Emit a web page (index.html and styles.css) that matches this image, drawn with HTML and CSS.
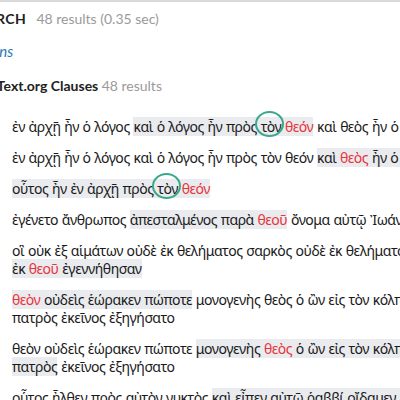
FILE: index.html
```html
<!DOCTYPE html>
<html>
<head>
<meta charset="utf-8">
<link rel="stylesheet" href="styles.css">
</head>
<body>
<div class="page">
  <header class="search-head">
    <span class="search-title">SEARCH</span>
    <span class="muted">48 results (0.35 sec)</span>
  </header>
  <div class="options"><a class="opt-link">Options</a></div>
  <section class="group">
    <h2 class="group-title"><span class="src">OpenText.org Clauses</span> <span class="muted">48 results</span></h2>
    <div class="results">
      <p class="row">ἐν ἀρχῇ ἦν ὁ λόγος <span class="hl">καὶ ὁ λόγος ἦν πρὸς <span class="ring">τὸν</span> <span class="red">θεόν</span></span> καὶ θεὸς ἦν ὁ λόγος</p>
      <p class="row">ἐν ἀρχῇ ἦν ὁ λόγος καὶ ὁ λόγος ἦν πρὸς τὸν θεόν <span class="hl">καὶ <span class="red">θεὸς</span> ἦν ὁ λόγος</span></p>
      <p class="row"><span class="hl">οὗτος ἦν ἐν ἀρχῇ πρὸς <span class="ring">τὸν</span> <span class="red">θεόν</span></span></p>
      <p class="row">ἐγένετο ἄνθρωπος <span class="hl">ἀπεσταλμένος παρὰ <span class="red">θεοῦ</span></span> ὄνομα αὐτῷ Ἰωάννης</p>
      <p class="row">οἳ οὐκ ἐξ αἱμάτων οὐδὲ ἐκ θελήματος σαρκὸς οὐδὲ ἐκ θελήματος ἀνδρὸς <span class="hl">ἀλλ᾽<br>ἐκ <span class="red">θεοῦ</span> ἐγεννήθησαν</span></p>
      <p class="row"><span class="hl"><span class="red">θεὸν</span> οὐδεὶς ἑώρακεν πώποτε</span> μονογενὴς θεὸς ὁ ὢν εἰς τὸν κόλπον τοῦ<br>πατρὸς ἐκεῖνος ἐξηγήσατο</p>
      <p class="row">θεὸν οὐδεὶς ἑώρακεν πώποτε <span class="hl">μονογενὴς <span class="red">θεὸς</span> ὁ ὢν εἰς τὸν κόλπον τοῦ<br>πατρὸς</span> ἐκεῖνος ἐξηγήσατο</p>
      <p class="row">οὗτος ἦλθεν πρὸς αὐτὸν νυκτὸς <span class="hl">καὶ εἶπεν αὐτῷ ῥαββί οἴδαμεν ὅτι ἀπὸ <span class="red">θεοῦ</span> ἐλήλυθας</span></p>
    </div>
  </section>
</div>
</body>
</html>
```
FILE: styles.css
```css
html, body {
  margin: 0;
  padding: 0;
  background: #fff;
  overflow: hidden;
}
.page {
  width: 600px;
  border-top: 2px solid #d9d9d9;
  font-family: Lato, "Liberation Sans", sans-serif;
  color: #222;
}
.search-head {
  margin-left: -31px;
  padding-top: 8px;
  height: 26px;
  display: flex;
  gap: 10px;
  font-size: 14px;
  align-items: baseline;
}
.search-title {
  font-weight: 700;
  letter-spacing: 0.5px;
}
.muted {
  color: #9a9a9a;
  font-weight: 400;
}
.options {
  margin-left: -36px;
  padding-top: 6px;
  height: 30px;
  font-size: 15px;
  font-style: italic;
}
.opt-link {
  color: #2a78b5;
}
.group-title {
  margin: 0 0 0 -36px;
  padding-top: 5px;
  font-size: 14px;
  font-weight: 700;
  height: 41px;
}
.results {
  padding-left: 12px;
  width: 540px;
}
.row {
  margin: 0 0 13px 0;
  font-family: "Noto Sans", sans-serif;
  font-size: 14px;
  letter-spacing: -0.45px;
  word-spacing: 0.5px;
  line-height: 18px;
  white-space: nowrap;
  color: #1a1a1a;
}
.hl {
  background: #e9ebee;
}
.red {
  color: #e8343a;
}
.ring {
  position: relative;
}
.ring::after {
  content: "";
  position: absolute;
  left: 50%;
  top: 50%;
  width: 25px;
  height: 22px;
  margin: -15.5px 0 0 -16px;
  border: 2.5px solid #3aa88c;
  border-radius: 50%;
}
```
